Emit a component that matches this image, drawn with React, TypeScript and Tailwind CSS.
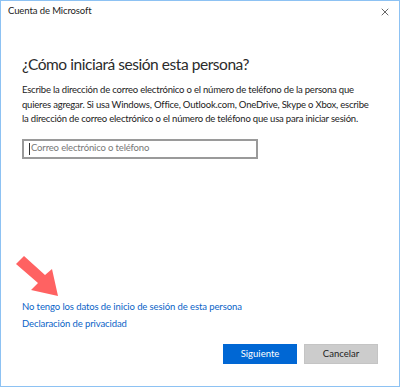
import { X } from "lucide-react";

export default function App() {
  return (
    <div className="w-[400px] h-[387px] bg-white border border-[#8dc2f3] flex flex-col text-[#222] font-['Lato',sans-serif] overflow-hidden">
      <div className="flex flex-row items-center justify-between h-[21px] pl-[7px] pr-[8px]">
        <span className="text-[9.5px] tracking-[-0.1px] text-[#222]">Cuenta de Microsoft</span>
        <X className="w-[12px] h-[12px] text-[#333]" strokeWidth={1.5} />
      </div>

      <div className="flex flex-col flex-1 px-[21px]">
        <h1 className="mt-[31px] text-[15.5px] tracking-[-0.45px] leading-[22px] text-[#2b2b2b]">¿Cómo iniciará sesión esta persona?</h1>
        <p className="mt-[8px] text-[9.5px] tracking-[-0.2px] leading-[14.5px] text-[#222] whitespace-nowrap">
          Escribe la dirección de correo electrónico o el número de teléfono de la persona que
          <br />
          quieres agregar. Si usa Windows, Office, Outlook.com, OneDrive, Skype o Xbox, escribe
          <br />
          la dirección de correo electrónico o el número de teléfono que usa para iniciar sesión.
        </p>
        <div className="mt-[12px] w-[236px] h-[20px] border-2 border-[#9a9a9a] flex items-center pl-[5px]">
          <span className="w-px h-[12px] bg-[#333]"></span>
          <span className="text-[9.5px] tracking-[-0.15px] text-[#777] ml-px">Correo electrónico o teléfono</span>
        </div>

        <div className="flex-1 relative">
          <svg className="absolute left-[-8px] bottom-[2px]" width="48" height="44" viewBox="0 0 48 44">
            <path d="M2 10 L10 2 L31 21 L38 15 L44 42 L17 36 L24 29 Z" fill="#ff6262" />
          </svg>
        </div>

        <div className="flex flex-col gap-[3px] text-[9.5px] tracking-[-0.1px] leading-[14px] text-[#0a63c7]">
          <span>No tengo los datos de inicio de sesión de esta persona</span>
          <span>Declaración de privacidad</span>
        </div>

        <div className="flex flex-row justify-end gap-[7px] mt-[13px] mb-[22px]">
          <button className="w-[74px] h-[20px] bg-[#0067d4] text-white text-[9.5px]">Siguiente</button>
          <button className="w-[74px] h-[20px] bg-[#cccccc] border border-[#c4c4c4] text-[#222] text-[9.5px]">Cancelar</button>
        </div>
      </div>
    </div>
  );
}
